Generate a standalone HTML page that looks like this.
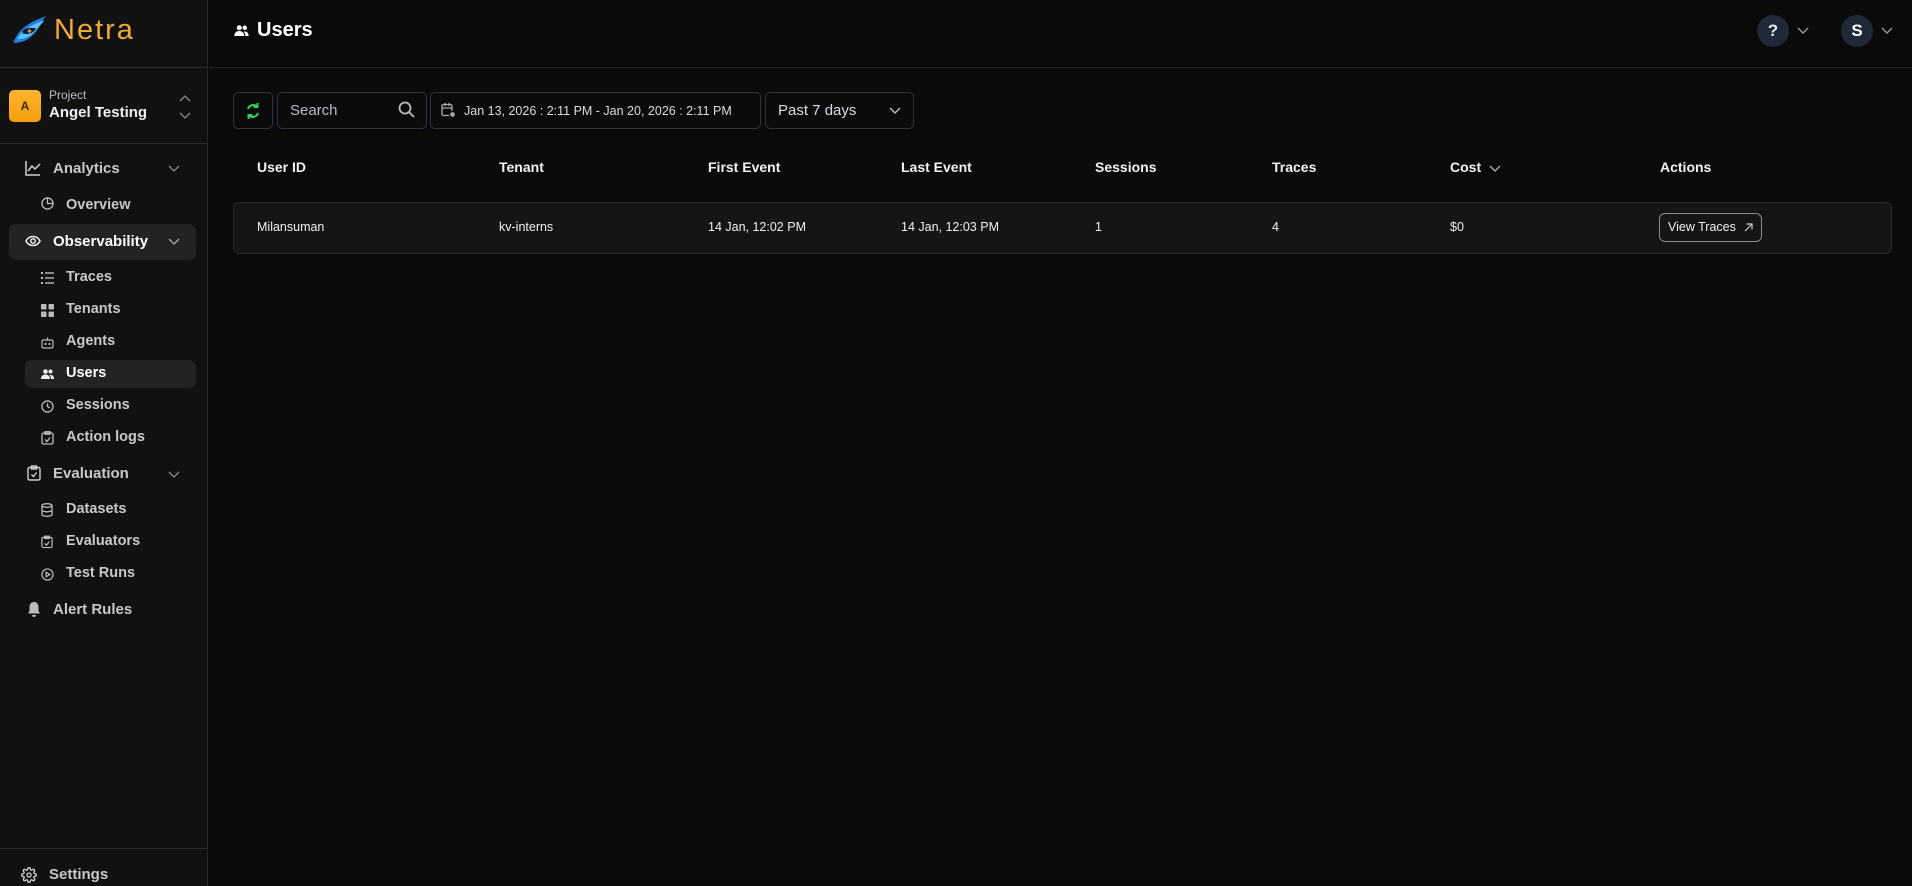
<!DOCTYPE html>
<html><head><meta charset="utf-8"><style>
*{box-sizing:border-box;margin:0;padding:0}
body{width:1912px;height:886px;background:#0a0a0a;font-family:"Liberation Sans",sans-serif;color:#e8e8e8;position:relative;overflow:hidden}
.abs{position:absolute}
#side{left:0;top:0;width:208px;height:886px;background:#111111;border-right:1px solid #262626}
.hl{height:1px;background:#2a2a2a}
.it{position:absolute;font-size:15px;font-weight:bold;color:#c8c8c8;display:flex;align-items:center;white-space:nowrap}
.it svg{position:absolute}
.sub{font-size:14.5px}
.box{position:absolute;border:1px solid #2e3440;border-radius:5px;background:#0b0b0b}
.th{position:absolute;top:159px;font-size:14px;font-weight:bold;color:#f2f2f2}
.td{position:absolute;top:220px;font-size:12.5px;color:#f0f0f0}
</style></head><body>
<div id="side" class="abs">
  <svg class="abs" style="left:12px;top:15px" width="36" height="29" viewBox="0 0 34 28"><path d="M1 27 C5 14 16 7 33 1 C25 8 27 12 21 18 C15 25 8 27 1 27Z" fill="#1e7fe0"/><path d="M5 23 C9 14 20 9 31 5 C25 12 23 16 17 20 C13 22 9 24 5 23Z" fill="#58c3f5"/><path d="M10 15 C14 12 18 12 23 13 C20 18 15 19 10 18Z" fill="#0a1a3a"/><path d="M16.5 13l1 2 2 .5-2 .5-1 2-1-2-2-.5 2-.5z" fill="#f5a623"/></svg>
  <div class="abs" style="left:54px;top:14px;font-size:29px;color:#f0a93a;letter-spacing:2px;font-weight:300">Netra</div>
  <div class="abs hl" style="left:0;top:67px;width:208px"></div>
  <div class="abs" style="left:9px;top:90px;width:32px;height:32px;border-radius:5px;background:linear-gradient(#ffb52e,#f59e0b);color:#3a2a00;font-size:12px;font-weight:bold;text-align:center;line-height:32px">A</div>
  <div class="abs" style="left:49px;top:88px;font-size:12px;color:#b8bcc8">Project</div>
  <div class="abs" style="left:49px;top:104px;font-size:15px;font-weight:bold;color:#eef0f5">Angel Testing</div>
  <svg class="abs" style="left:179px;top:94px" width="12" height="26" viewBox="0 0 12 26" fill="none" stroke="#888" stroke-width="1.3"><path d="M1 7l5-5 5 5M1 19l5 5 5-5"/></svg>
  <div class="abs hl" style="left:0;top:143px;width:208px"></div>

  <div class="it" style="left:25px;top:160px"><svg width="16" height="16" viewBox="0 0 16 16" fill="none" stroke="#cfcfcf" stroke-width="1.5" style="left:0;top:0"><path d="M1 1v14h14M3 11l4-5 3 3 5-5"/></svg><span style="margin-left:28px">Analytics</span></div>
  <svg class="abs" style="left:168px;top:165px" width="12" height="8" viewBox="0 0 12 8" fill="none" stroke="#888" stroke-width="1.3"><path d="M1 1l5 5 5-5"/></svg>
  <div class="it sub" style="left:41px;top:197px"><svg width="13" height="13" viewBox="0 0 14 14" fill="none" stroke="#bbb" stroke-width="1.4" style="left:0;top:0"><circle cx="7" cy="7" r="6"/><path d="M7 1v6h6"/></svg><span style="margin-left:25px">Overview</span></div>

  <div class="abs" style="left:9px;top:224px;width:187px;height:36px;border-radius:7px;background:#232323"></div>
  <div class="it" style="left:25px;top:233px;color:#fff"><svg width="16" height="12" viewBox="0 0 16 12" fill="none" stroke="#eee" stroke-width="1.5" style="left:0;top:2px"><path d="M1 6c3-6 11-6 14 0c-3 6-11 6-14 0z"/><circle cx="8" cy="6" r="2.3"/></svg><span style="margin-left:28px">Observability</span></div>
  <svg class="abs" style="left:168px;top:238px" width="12" height="8" viewBox="0 0 12 8" fill="none" stroke="#aaa" stroke-width="1.3"><path d="M1 1l5 5 5-5"/></svg>

  <div class="it sub" style="left:41px;top:269px"><svg width="13" height="12" viewBox="0 0 13 12" fill="#bbb" style="left:0;top:3px"><rect x="0" y="0" width="2" height="2"/><rect x="4" y="0.3" width="9" height="1.4"/><rect x="0" y="5" width="2" height="2"/><rect x="4" y="5.3" width="9" height="1.4"/><rect x="0" y="10" width="2" height="2"/><rect x="4" y="10.3" width="9" height="1.4"/></svg><span style="margin-left:25px">Traces</span></div>
  <div class="it sub" style="left:41px;top:301px"><svg width="13" height="13" viewBox="0 0 13 13" fill="#bbb" style="left:0;top:3px"><rect width="5.5" height="5.5" rx="1"/><rect x="7.5" width="5.5" height="5.5" rx="1"/><rect y="7.5" width="5.5" height="5.5" rx="1"/><rect x="7.5" y="7.5" width="5.5" height="5.5" rx="1"/></svg><span style="margin-left:25px">Tenants</span></div>
  <div class="it sub" style="left:41px;top:333px"><svg width="13" height="13" viewBox="0 0 13 13" fill="none" stroke="#bbb" stroke-width="1.2" style="left:0;top:3px"><rect x="1" y="4" width="11" height="8" rx="1.5"/><path d="M6.5 4V1.5"/><circle cx="4.5" cy="8" r=".5"/><circle cx="8.5" cy="8" r=".5"/></svg><span style="margin-left:25px">Agents</span></div>
  <div class="abs" style="left:25px;top:360px;width:171px;height:28px;border-radius:7px;background:#232323"></div>
  <div class="it sub" style="left:41px;top:365px;color:#fff"><svg width="13" height="10" viewBox="0 0 13 10" fill="#eee" style="left:0;top:4px"><circle cx="4.5" cy="2.5" r="2.3"/><circle cx="9.5" cy="2.5" r="2"/><path d="M0 10c0-3 2-4.5 4.5-4.5S9 7 9 10zM10 10c0-2-.5-3-1.5-4 2.5-.5 4.5 1 4.5 4z"/></svg><span style="margin-left:25px">Users</span></div>
  <div class="it sub" style="left:41px;top:397px"><svg width="13" height="13" viewBox="0 0 14 14" fill="none" stroke="#bbb" stroke-width="1.4" style="left:0;top:3px"><circle cx="7" cy="7" r="6"/><path d="M7 3.5V7l2.5 1.5"/></svg><span style="margin-left:25px">Sessions</span></div>
  <div class="it sub" style="left:41px;top:429px"><svg width="13" height="14" viewBox="0 0 13 14" fill="none" stroke="#bbb" stroke-width="1.3" style="left:0;top:2px"><rect x="1" y="2" width="11" height="11" rx="1.5"/><rect x="4" y="0.7" width="5" height="2.5"/><path d="M4 8.5l2 2 3-4"/></svg><span style="margin-left:25px">Action logs</span></div>

  <div class="it" style="left:25px;top:465px"><svg width="14" height="16" viewBox="0 0 14 16" fill="none" stroke="#cfcfcf" stroke-width="1.4" style="left:2px;top:0"><rect x="1" y="2.5" width="12" height="12.5" rx="1.5"/><rect x="4.5" y="1" width="5" height="3"/><path d="M4.5 9.5l2 2 3-4"/></svg><span style="margin-left:28px">Evaluation</span></div>
  <svg class="abs" style="left:168px;top:471px" width="12" height="8" viewBox="0 0 12 8" fill="none" stroke="#888" stroke-width="1.3"><path d="M1 1l5 5 5-5"/></svg>
  <div class="it sub" style="left:41px;top:501px"><svg width="12" height="14" viewBox="0 0 12 14" fill="none" stroke="#bbb" stroke-width="1.3" style="left:0;top:2px"><ellipse cx="6" cy="2.5" rx="5" ry="1.8"/><path d="M1 2.5v9c0 1 2.2 1.8 5 1.8s5-.8 5-1.8v-9M1 7c0 1 2.2 1.8 5 1.8s5-.8 5-1.8"/></svg><span style="margin-left:25px">Datasets</span></div>
  <div class="it sub" style="left:41px;top:533px"><svg width="12" height="14" viewBox="0 0 13 14" fill="none" stroke="#bbb" stroke-width="1.3" style="left:0;top:2px"><rect x="1" y="2" width="11" height="11" rx="1.5"/><rect x="4" y="0.7" width="5" height="2.5"/><path d="M4 8.5l2 2 3-4"/></svg><span style="margin-left:25px">Evaluators</span></div>
  <div class="it sub" style="left:41px;top:565px"><svg width="13" height="13" viewBox="0 0 14 14" fill="none" stroke="#bbb" stroke-width="1.3" style="left:0;top:3px"><circle cx="7" cy="7" r="6"/><path d="M5.5 4.5v5l4-2.5z"/></svg><span style="margin-left:25px">Test Runs</span></div>
  <div class="it" style="left:25px;top:601px"><svg width="14" height="15" viewBox="0 0 14 15" fill="#bbb" style="left:2px;top:1px"><path d="M7 0c-3 0-4.5 2.5-4.5 5v4L1 11.5h12L11.5 9V5C11.5 2.5 10 0 7 0zM5 13h4a2 2 0 0 1-4 0z"/></svg><span style="margin-left:28px">Alert Rules</span></div>

  <div class="abs hl" style="left:0;top:848px;width:208px"></div>
  <div class="it" style="left:21px;top:866px"><svg width="16" height="16" viewBox="0 0 24 24" fill="none" stroke="#cfcfcf" stroke-width="2" style="left:0;top:1px"><circle cx="12" cy="12" r="3"/><path d="M19.4 15a1.7 1.7 0 0 0 .3 1.8l.1.1a2 2 0 1 1-2.8 2.8l-.1-.1a1.7 1.7 0 0 0-1.8-.3 1.7 1.7 0 0 0-1 1.5V21a2 2 0 1 1-4 0v-.1a1.7 1.7 0 0 0-1.100-1.5 1.7 1.7 0 0 0-1.8.3l-.1.1a2 2 0 1 1-2.8-2.8l.1-.1a1.7 1.7 0 0 0 .3-1.8 1.7 1.7 0 0 0-1.5-1H3a2 2 0 1 1 0-4h.1a1.7 1.7 0 0 0 1.5-1.1 1.7 1.7 0 0 0-.3-1.8l-.1-.1a2 2 0 1 1 2.8-2.8l.1.1a1.7 1.7 0 0 0 1.8.3H9a1.7 1.7 0 0 0 1-1.5V3a2 2 0 1 1 4 0v.1a1.7 1.7 0 0 0 1 1.5 1.7 1.7 0 0 0 1.8-.3l.1-.1a2 2 0 1 1 2.8 2.8l-.1.1a1.7 1.7 0 0 0-.3 1.8V9a1.7 1.7 0 0 0 1.5 1H21a2 2 0 1 1 0 4h-.1a1.7 1.7 0 0 0-1.5 1z"/></svg><span style="margin-left:28px">Settings</span></div>
</div>

<!-- header -->
<svg class="abs" style="left:234px;top:25px" width="15" height="11" viewBox="0 0 13 10" fill="#fff"><circle cx="4.5" cy="2.5" r="2.3"/><circle cx="9.5" cy="2.5" r="2"/><path d="M0 10c0-3 2-4.5 4.5-4.5S9 7 9 10zM10 10c0-2-.5-3-1.5-4 2.5-.5 4.5 1 4.5 4z"/></svg>
<div class="abs" style="left:257px;top:19px;font-size:20px;font-weight:bold;color:#fff">Users</div>
<div class="abs" style="left:1757px;top:15px;width:32px;height:32px;border-radius:50%;background:#1f2937;color:#e5e7eb;font-weight:bold;font-size:17px;text-align:center;line-height:32px">?</div>
<svg class="abs" style="left:1797px;top:27px" width="12" height="8" viewBox="0 0 12 8" fill="none" stroke="#999" stroke-width="1.4"><path d="M1 1l5 5 5-5"/></svg>
<div class="abs" style="left:1841px;top:15px;width:32px;height:32px;border-radius:50%;background:#1f2937;color:#fff;font-weight:bold;font-size:17px;text-align:center;line-height:32px">S</div>
<svg class="abs" style="left:1881px;top:27px" width="12" height="8" viewBox="0 0 12 8" fill="none" stroke="#999" stroke-width="1.4"><path d="M1 1l5 5 5-5"/></svg>
<div class="abs" style="left:209px;top:67px;width:1703px;height:1px;background:#1f2633"></div>

<!-- toolbar -->
<div class="box" style="left:233px;top:92px;width:40px;height:37px"></div>
<svg class="abs" style="left:245px;top:102px" width="16" height="18" viewBox="0 0 16 18" fill="none" stroke="#34d058" stroke-width="2"><path d="M3 7a5.5 5.5 0 0 1 9-2.5M13 11a5.5 5.5 0 0 1-9 2.5"/><path d="M12.5 1v4h-4M3.5 17v-4h4"/></svg>
<div class="box" style="left:277px;top:92px;width:150px;height:37px"></div>
<div class="abs" style="left:290px;top:102px;font-size:15px;color:#b5bcc8">Search</div>
<svg class="abs" style="left:398px;top:101px" width="17" height="17" viewBox="0 0 17 17" fill="none" stroke="#bbb" stroke-width="1.8"><circle cx="7" cy="7" r="5.5"/><path d="M11 11l5 5"/></svg>
<div class="box" style="left:430px;top:92px;width:331px;height:37px"></div>
<svg class="abs" style="left:441px;top:102px" width="15" height="16" viewBox="0 0 15 16" fill="none" stroke="#aaa" stroke-width="1.3"><rect x="1" y="2.5" width="10" height="11" rx="1.5"/><path d="M1 6h10M4 1v3M8 1v3"/><circle cx="11.5" cy="12.5" r="3" fill="#aaa" stroke="#0b0b0b"/></svg>
<div class="abs" style="left:464px;top:104px;font-size:12.5px;color:#d8dce4">Jan 13, 2026 : 2:11 PM - Jan 20, 2026 : 2:11 PM</div>
<div class="box" style="left:765px;top:92px;width:149px;height:37px"></div>
<div class="abs" style="left:778px;top:102px;font-size:15px;color:#d8dce4">Past 7 days</div>
<svg class="abs" style="left:889px;top:107px" width="12" height="8" viewBox="0 0 12 8" fill="none" stroke="#bbb" stroke-width="1.5"><path d="M1 1l5 5 5-5"/></svg>

<!-- table header -->
<div class="th" style="left:257px">User ID</div>
<div class="th" style="left:499px">Tenant</div>
<div class="th" style="left:708px">First Event</div>
<div class="th" style="left:901px">Last Event</div>
<div class="th" style="left:1095px">Sessions</div>
<div class="th" style="left:1272px">Traces</div>
<div class="th" style="left:1450px">Cost</div>
<svg class="abs" style="left:1489px;top:165px" width="12" height="8" viewBox="0 0 12 8" fill="none" stroke="#aaa" stroke-width="1.4"><path d="M1 1l5 5 5-5"/></svg>
<div class="th" style="left:1660px">Actions</div>

<!-- row -->
<div class="abs" style="left:233px;top:202px;width:1659px;height:52px;border:1px solid #2a2a2a;border-radius:6px;background:#151515"></div>
<div class="td" style="left:257px">Milansuman</div>
<div class="td" style="left:499px">kv-interns</div>
<div class="td" style="left:708px">14 Jan, 12:02 PM</div>
<div class="td" style="left:901px">14 Jan, 12:03 PM</div>
<div class="td" style="left:1095px">1</div>
<div class="td" style="left:1272px">4</div>
<div class="td" style="left:1450px">$0</div>
<div class="abs" style="left:1659px;top:213px;width:103px;height:29px;border:1px solid #8a8a8a;border-radius:6px"></div>
<div class="abs" style="left:1668px;top:220px;font-size:12.5px;color:#f0f0f0">View Traces</div>
<svg class="abs" style="left:1744px;top:223px" width="9" height="9" viewBox="0 0 9 9" fill="none" stroke="#ccc" stroke-width="1.2"><path d="M1 8l7-7M2.5 1H8v5.5"/></svg>
</body></html>
